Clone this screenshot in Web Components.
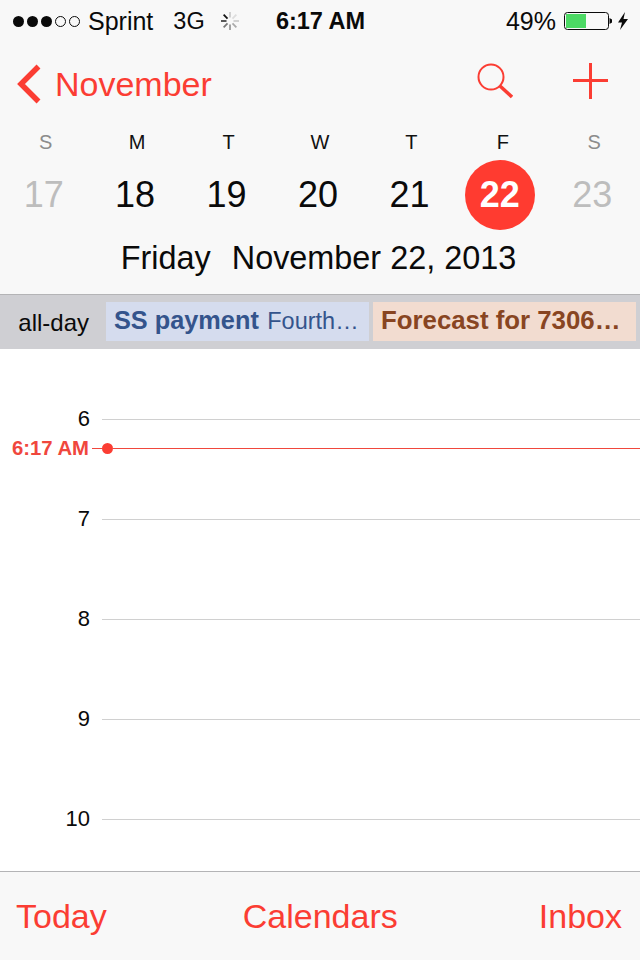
<!DOCTYPE html>
<html lang="en">
<head>
<meta charset="utf-8">
<title>Calendar</title>
<style>
    html, body { margin: 0; padding: 0; background: #fff; }
    body { font-family: "Liberation Sans", Arial, sans-serif; width: 640px; height: 960px; overflow: hidden; display: flex; flex-direction: column; }
</style>
</head>
<body>
<calendar-header>
    <status-bar></status-bar>
    <nav-bar></nav-bar>
    <week-strip></week-strip>
    <date-title></date-title>
</calendar-header>
<allday-row>
    <allday-event tone="blue"><b>SS payment</b> <small>Fourth…</small></allday-event>
    <allday-event tone="brown"><b>Forecast for 7306…</b></allday-event>
</allday-row>
<day-timeline></day-timeline>
<tab-bar></tab-bar>

<script>
class Base extends HTMLElement {
    constructor() {
        super();
        this.attachShadow({mode: 'open'});
    }
    connectedCallback() {
        this.shadowRoot.innerHTML = `<style>${this.css()}</style>${this.html()}`;
    }
    css() { return ':host { display: block; }'; }
    html() { return '<slot></slot>'; }
}

class CalendarHeader extends Base {
    css() {
        return `:host { display: block; height: 294px; background: #f8f8f8; border-bottom: 1px solid #b4b4b6; }`;
    }
}

class StatusBar extends Base {
    css() {
        return `
            :host { display: grid; grid-template-columns: 1fr auto 1fr; align-items: center; height: 42px; padding: 0 12px 0 13px; font-size: 25px; color: #0a0a0a; }
            .left, .right { display: flex; align-items: center; }
            .right { justify-content: flex-end; }
            .dots { display: flex; gap: 3px; margin-right: 8px; }
            .dots i { width: 11px; height: 11px; border-radius: 50%; background: #0a0a0a; box-sizing: border-box; }
            .dots i.off { background: none; border: 1px solid #0a0a0a; }
            .net { margin-left: 20px; font-size: 23.5px; }
            svg { display: block; }
            .spin { margin-left: 14px; }
            .time { font-weight: bold; font-size: 23.5px; }
            .pct { margin-right: 8px; }
            .bolt { margin-left: 6px; }
        `;
    }
    html() {
        // eight spokes, clockwise from north, darkest at north-west
        const shades = ['#ccc', '#ddd', '#ccc', '#aaa', '#999', '#777', '#444', '#111'];
        const spokes = shades.map((shade, i) =>
            `<line x1="11" y1="2" x2="11" y2="7.5" stroke="${shade}" stroke-width="1.8" transform="rotate(${i * 45} 11 11)"/>`
        ).join('');
        return `
            <div class="left">
                <div class="dots"><i></i><i></i><i></i><i class="off"></i><i class="off"></i></div>
                <span>Sprint</span>
                <span class="net">3G</span>
                <svg class="spin" width="22" height="22" viewBox="0 0 22 22">${spokes}</svg>
            </div>
            <div class="time">6:17 AM</div>
            <div class="right">
                <span class="pct">49%</span>
                <svg width="48" height="18" viewBox="0 0 48 18">
                    <rect x=".5" y=".5" width="44" height="17" rx="3" fill="none" stroke="#0a0a0a"/>
                    <rect x="2" y="2" width="20" height="14" fill="#4cd964"/>
                    <path d="M45.5 6l2.5 1.5v3L45.5 12z" fill="#0a0a0a"/>
                </svg>
                <svg class="bolt" width="10" height="18" viewBox="0 0 10 18"><path d="M7 0L0 10.5h4L2 18l8-11H5.5z" fill="#0a0a0a"/></svg>
            </div>
        `;
    }
}

class NavBar extends Base {
    css() {
        return `
            :host { display: flex; align-items: center; box-sizing: border-box; height: 76px; padding: 8px 0 0 17px; color: #fb3d33; font-size: 34px; }
            svg { display: block; flex: none; }
            .title { margin-left: 14px; flex: 1; }
            .search { margin: -7px 60px 0 0; }
            .plus { margin: -6px 32px 0 0; }
        `;
    }
    html() {
        return `
            <svg width="24" height="40" viewBox="0 0 24 40"><path d="M21.5 2.5L4 20l17.5 17.5" fill="none" stroke="#fb3d33" stroke-width="5.5"/></svg>
            <span class="title">November</span>
            <svg class="search" width="36" height="36" viewBox="0 0 36 36"><circle cx="14" cy="14" r="12.5" fill="none" stroke="#fb3d33" stroke-width="2"/><path d="M23 23l12 11" fill="none" stroke="#fb3d33" stroke-width="3.5"/></svg>
            <svg class="plus" width="35" height="36" viewBox="0 0 35 36"><path d="M17.5 0v36M0 17.5h35" fill="none" stroke="#fb3d33" stroke-width="3"/></svg>
        `;
    }
}

class WeekStrip extends Base {
    css() {
        return `
            :host { display: grid; grid-template-columns: repeat(7, 1fr); justify-items: center; box-sizing: border-box; height: 120px; padding-top: 6px; }
            .day { display: flex; flex-direction: column; align-items: center; }
            .letter { height: 36px; line-height: 36px; font-size: 20px; color: #111; }
            .num { width: 70px; height: 70px; line-height: 70px; text-align: center; font-size: 36px; color: #0a0a0a; border-radius: 50%; transform: translateX(-2px); }
            .weekend .letter { color: #8c8c8c; }
            .weekend .num { color: #bdbdbd; }
            .today .num { background: #ff3b30; color: #fff; font-weight: bold; transform: translateX(-3px); }
        `;
    }
    html() {
        const days = [['S', 17], ['M', 18], ['T', 19], ['W', 20], ['T', 21], ['F', 22], ['S', 23]];
        return days.map(([l, n], i) => {
            const cls = (i === 0 || i === 6) ? 'weekend' : (n === 22 ? 'today' : '');
            return `<div class="day ${cls}"><span class="letter">${l}</span><span class="num">${n}</span></div>`;
        }).join('');
    }
}

class DateTitle extends Base {
    css() {
        return `
            :host { display: flex; justify-content: center; gap: 21px; font-size: 32.4px; line-height: 36px; color: #0a0a0a; margin-top: 2px; padding-right: 3px; }
        `;
    }
    html() {
        return `<span>Friday</span><span>November 22, 2013</span>`;
    }
}

class AlldayRow extends Base {
    css() {
        return `
            :host { display: grid; grid-template-columns: 263px 263px; gap: 4px; height: 54px; box-sizing: border-box; padding: 7px 4px 8px 106px; background: #cfcfd3; position: relative; }
            .label { position: absolute; left: 0; top: 0; width: 106px; height: 54px; box-sizing: border-box; padding-right: 17px; text-align: right; line-height: 55px; font-size: 24px; color: #0a0a0a; }
        `;
    }
    html() {
        return `<span class="label">all-day</span><slot></slot>`;
    }
}

class AlldayEvent extends Base {
    css() {
        return `
            :host { display: block; padding-left: 8px; line-height: 37px; white-space: nowrap; overflow: hidden; }
            :host([tone="blue"]) { background: #d5dcee; color: #34548c; --title-size: 25.3px; }
            :host([tone="brown"]) { background: #f2dcd0; color: #884522; --title-size: 25.8px; }
            ::slotted(b) { font-size: var(--title-size); font-weight: bold; }
            ::slotted(small) { font-size: 23.5px; margin-left: 4px; }
        `;
    }
}

class DayTimeline extends Base {
    css() {
        return `
            :host { display: block; position: relative; flex: 1; padding-top: 20px; background: #fff; }
            .hour { display: grid; grid-template-columns: 90px 1fr; column-gap: 12px; align-items: center; height: 100px; font-size: 22px; color: #0a0a0a; text-align: right; }
            .hour i { display: block; height: 1px; background: #d0d0d0; }
            .now { position: absolute; left: 0; right: 0; top: 88px; height: 22px; display: flex; align-items: center; color: #f0473d; font-size: 20.3px; font-weight: bold; }
            .now b { width: 89px; text-align: right; }
            .now .dash { width: 10px; height: 1px; margin-left: 3px; background: #f0473d; }
            .now .dot { width: 11px; height: 11px; border-radius: 50%; background: #fb3d33; flex: none; }
            .now .rule { flex: 1; height: 1px; background: #f0473d; }
        `;
    }
    html() {
        const rows = [6, 7, 8, 9, 10].map(h => `<div class="hour"><span>${h}</span><i></i></div>`).join('');
        return `${rows}
            <div class="now"><b>6:17 AM</b><span class="dash"></span><span class="dot"></span><span class="rule"></span></div>`;
    }
}

class TabBar extends Base {
    css() {
        return `
            :host { display: flex; justify-content: space-between; align-items: center; box-sizing: border-box; height: 89px; padding: 0 18px 0 16px; background: #f8f8f8; border-top: 1px solid #b4b4b6; color: #fb3d33; font-size: 34px; }
            .mid { margin-right: 5px; }
        `;
    }
    html() {
        return `<span>Today</span><span class="mid">Calendars</span><span>Inbox</span>`;
    }
}

customElements.define('calendar-header', CalendarHeader);
customElements.define('status-bar', StatusBar);
customElements.define('nav-bar', NavBar);
customElements.define('week-strip', WeekStrip);
customElements.define('date-title', DateTitle);
customElements.define('allday-row', AlldayRow);
customElements.define('allday-event', AlldayEvent);
customElements.define('day-timeline', DayTimeline);
customElements.define('tab-bar', TabBar);
</script>
</body>
</html>
